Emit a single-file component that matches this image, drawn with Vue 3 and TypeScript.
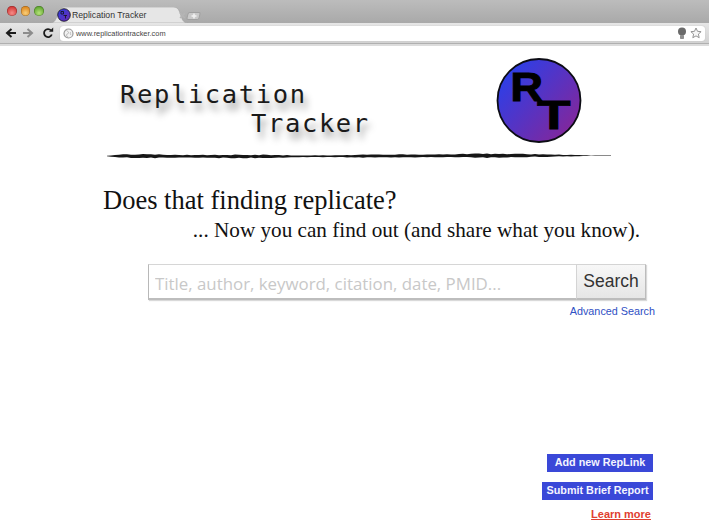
<script setup lang="ts">
const lights: string[] = ['red', 'amber', 'green']

// A dry-brush stroke: deterministic jitter along the top and bottom edges.
function jitter(i: number): number {
  const v = Math.sin(i * 12.9898) * 43758.5453
  return v - Math.floor(v)
}
function thickness(x: number): number {
  if (x < 10) return 0.3 + x * 0.09
  if (x > 480) return 0.2
  if (x > 430) return 1.4 - ((x - 430) / 50) * 1.1
  return 1.3 + 0.3 * Math.sin(x / 47) + 0.25 * Math.sin(x / 19)
}
const top: string[] = []
const bottom: string[] = []
for (let x = 0; x <= 504; x += 4) {
  const t = thickness(x)
  const mid = 3 + 0.4 * Math.sin(x / 90)
  top.push(`${x} ${(mid - t * (0.75 + jitter(x) * 0.5)).toFixed(2)}`)
  bottom.unshift(`${x} ${(mid + t * (0.75 + jitter(x + 7) * 0.5)).toFixed(2)}`)
}
const brushPath = `M${top.join(' L')} L${bottom.join(' L')} Z`
</script>

<template>
  <div class="window">
    <header class="chrome">
      <div class="tabstrip">
        <div class="lights">
          <span v-for="l in lights" :key="l" class="light" :class="l"></span>
        </div>
        <div class="tab">
          <svg class="tab-shape" width="138" height="16" viewBox="0 0 138 16">
            <path d="M0 16 C5 16 6 12 7.500 7.500 C9 3 10 0 15 0 H123 C128 0 129 3 130.500 7.500 C132 12 133 16 138 16 Z" fill="#e6e6e6" stroke="#a2a2a2" stroke-width="0.6" />
          </svg>
          <svg class="favicon" width="14" height="14" viewBox="0 0 14 14">
            <defs>
              <linearGradient id="fav" x1="0" y1="0" x2="1" y2="1">
                <stop offset="0" stop-color="#2f3fe0" />
                <stop offset="1" stop-color="#6a2ab0" />
              </linearGradient>
            </defs>
            <circle cx="7" cy="7" r="6.300" fill="url(#fav)" stroke="#111" stroke-width="0.8" />
            <path d="M4 3.500h2.500v2.500h-2.500zM6.500 7.500h3.500M8.500 7.500v3" fill="none" stroke="#111" stroke-width="0.8" />
          </svg>
          <span class="tab-title">Replication Tracker</span>
          <svg class="tab-close" width="7" height="7" viewBox="0 0 7 7">
            <path d="M1 1l5 5M6 1l-5 5" stroke="#b5b5b5" stroke-width="1.500" />
          </svg>
        </div>
        <div class="newtab">
          <svg width="6" height="6" viewBox="0 0 6 6"><path d="M3 0.500v5M0.500 3h5" stroke="#f2f2f2" stroke-width="1.500" /></svg>
        </div>
      </div>
      <div class="toolbar">
        <svg class="nav" width="12" height="12" viewBox="0 0 12 12">
          <path d="M11 6H3M6.500 2L2 6l4.500 4" fill="none" stroke="#1c1c1c" stroke-width="2" />
        </svg>
        <svg class="nav" width="12" height="12" viewBox="0 0 12 12">
          <path d="M1 6h8M5.500 2L10 6l-4.500 4" fill="none" stroke="#8c8c8c" stroke-width="2" />
        </svg>
        <svg class="nav reload" width="12" height="12" viewBox="0 0 12 12">
          <path d="M9.800 7.500A4 4 0 1 1 9 3.300" fill="none" stroke="#1c1c1c" stroke-width="1.800" />
          <path d="M7 4.800h4.200V0.600z" fill="#1c1c1c" />
        </svg>
        <div class="omnibox">
          <svg class="globe" width="11" height="11" viewBox="0 0 11 11">
            <circle cx="5.500" cy="5.500" r="4.500" fill="#f2f2f2" stroke="#9a9a9a" stroke-width="1.200" />
            <path d="M3.500 2.500c1 1 2.500 1 2 2.500s-2 .5-2 2 1.500 1.500 1.500 2M8 4c-1 .5-1 2 0 3" fill="none" stroke="#b0b0b0" stroke-width="0.800" />
          </svg>
          <span class="url">www.replicationtracker.com</span>
          <span class="omni-spacer"></span>
          <svg class="bulb" width="10" height="13" viewBox="0 0 10 13">
            <circle cx="5" cy="4.500" r="4" fill="#6a6a6a" />
            <rect x="3" y="8" width="4" height="4" rx="0.800" fill="#8f8f8f" />
          </svg>
          <svg class="star" width="12" height="12" viewBox="0 0 12 12">
            <path d="M6 1l1.500 3.300 3.600.4-2.700 2.400.8 3.600L6 8.900l-3.200 1.800.8-3.600L.9 4.700l3.600-.4z" fill="#f6f6f6" stroke="#8a8a8a" stroke-width="0.900" />
          </svg>
        </div>
      </div>
    </header>

    <main class="page">
      <section class="masthead">
        <div class="wordmark">
          <div class="word-one">Replication</div>
          <div class="word-two">Tracker</div>
        </div>
        <svg class="logo" width="86" height="87" viewBox="0 0 86 87">
          <defs>
            <linearGradient id="rt" x1="0.100" y1="0.150" x2="0.900" y2="0.850">
              <stop offset="0" stop-color="#2c3fe8" />
              <stop offset="1" stop-color="#82279c" />
            </linearGradient>
          </defs>
          <circle cx="43" cy="43.500" r="41.500" fill="url(#rt)" stroke="#0c0c14" stroke-width="1.800" />
          <text class="logo-letter" transform="translate(14.500 44) scale(1.020 0.92)" font-size="44" stroke="#000" stroke-width="1.200">R</text>
          <text class="logo-letter" transform="translate(41 71.500) scale(1.340 0.980)" font-size="41" stroke="#000" stroke-width="0.800">T</text>
        </svg>
      </section>

      <svg class="brush" width="504" height="6" viewBox="0 0 504 6">
        <path :d="brushPath" fill="#161616" />
      </svg>

      <h1 class="headline">Does that finding replicate?</h1>
      <p class="subline">... Now you can find out (and share what you know).</p>

      <form class="search" @submit.prevent>
        <input class="search-input" type="text" placeholder="Title, author, keyword, citation, date, PMID..." />
        <button class="search-btn" type="submit">Search</button>
      </form>
      <div class="advanced"><a href="#" @click.prevent>Advanced Search</a></div>

      <div class="actions">
        <a class="action add" href="#" @click.prevent>Add new RepLink</a>
        <a class="action submit" href="#" @click.prevent>Submit Brief Report</a>
        <a class="learn" href="#" @click.prevent>Learn more</a>
      </div>
    </main>
  </div>
</template>

<style>
html, body { margin: 0; background: #fff; overflow: hidden; }
</style>

<style scoped>
.window { width: 709px; height: 532px; overflow: hidden; display: flex; flex-direction: column; background: #fff; font-family: "Liberation Sans", Arial, sans-serif; }

.chrome { flex: none; height: 46px; display: flex; flex-direction: column; }
.tabstrip { height: 23px; display: flex; align-items: flex-end; background: linear-gradient(#bcbcbc, #a9a9a9); }
.lights { display: flex; gap: 4px; align-self: flex-start; padding: 6px 0 0 7px; width: 43px; box-sizing: border-box; flex: none; }
.light { width: 9.500px; height: 9.500px; border-radius: 50%; flex: none; box-shadow: inset 0 0 0 0.500px rgba(0,0,0,.35); }
.red { background: radial-gradient(circle at 50% 70%, #f58c88, #d43a38 70%); }
.amber { background: radial-gradient(circle at 50% 70%, #f8cf7a, #de8a22 70%); }
.green { background: radial-gradient(circle at 50% 70%, #b6e27a, #62a832 70%); }

.tab { position: relative; width: 138px; height: 16px; flex: none; margin-left: 7px; display: flex; align-items: center; padding-left: 7px; box-sizing: border-box; }
.tab-shape { position: absolute; left: 0; top: 0; }
.favicon, .tab-title, .tab-close { position: relative; }
.favicon { flex: none; }
.tab-title { font-size: 8.700px; color: #333; margin-left: 1px; white-space: nowrap; }
.tab-close { margin-left: 33px; flex: none; }
.newtab { width: 13px; height: 8px; margin: 0 0 3px -1px; background: #c9c9c9; border: 1px solid #a0a0a0; border-radius: 2px; transform: skewX(-14deg); display: flex; align-items: center; justify-content: center; box-sizing: border-box; flex: none; }
.newtab svg { transform: skewX(14deg); }

.toolbar { height: 20px; display: flex; align-items: center; padding: 0 4px 0 5px; gap: 5px; background: linear-gradient(#e6e6e6, #d2d2d2); border-bottom: 1px solid #b0b0b0; box-shadow: 0 2px 0 #dcdcdc; box-sizing: content-box; }
.nav { flex: none; }
.reload { margin-left: 3px; }
.omnibox { flex: 1; height: 15px; margin-left: 1px; background: #fff; border-radius: 3px; display: flex; align-items: center; padding: 0 3px 0 3px; box-shadow: 0 0 1px #aaa; }
.globe { flex: none; }
.url { font-size: 7.400px; color: #444; margin-left: 2px; white-space: nowrap; }
.omni-spacer { flex: 1; }
.bulb { flex: none; margin-right: 3px; }
.star { flex: none; }

.page { flex: 1; min-height: 0; display: flex; flex-direction: column; position: relative; }
.masthead { height: 98px; display: flex; align-items: flex-start; padding: 11px 0 0 120px; box-sizing: border-box; }
.wordmark { width: 376px; padding-top: 23px; font-family: "DejaVu Sans Mono", monospace; font-size: 25.500px; letter-spacing: 1.620px; color: #1a1a1a; text-shadow: 3px 7px 7px rgba(0,0,0,.42); line-height: 29px; flex: none; }
.word-two { margin-left: 131px; }
.logo { flex: none; margin-top: 0; }
.logo-letter { font-family: "Liberation Sans", Arial, sans-serif; font-weight: 700; fill: #000; }

.brush { display: block; margin: 9px 0 0 107px; flex: none; }

.headline { margin: 26px 0 0 103px; font-family: "Liberation Serif", "Times New Roman", serif; font-size: 26.500px; line-height: 31px; font-weight: 400; color: #111; }
.subline { margin: 2px 69px 0 0; text-align: right; font-family: "Liberation Serif", "Times New Roman", serif; font-size: 21.200px; line-height: 24px; color: #111; }

.search { display: flex; margin: 22px 0 0 148px; width: 498px; height: 36px; flex: none; box-shadow: 1px 1px 1px rgba(0,0,0,.15); }
.search-input { flex: 1; min-width: 0; height: 36px; box-sizing: border-box; padding: 3px 4px 0 6px; border: 1px solid #d6d6d6; border-left-color: #b8b8b8; border-bottom: 2px solid #bdbdbd; border-right: 0; background: #fff; font-family: "Open Sans", sans-serif; font-size: 16.850px; outline: none; }
.search-input::placeholder { color: #c8c8c8; opacity: 1; }
.search-btn { width: 70px; height: 36px; flex: none; padding: 0; border: 1px solid #d4d4d4; border-right-color: #bcbcbc; border-bottom: 2px solid #bcbcbc; background: linear-gradient(#f7f7f7, #e6e6e6); font-family: "Liberation Sans", Arial, sans-serif; font-size: 17.500px; color: #333; }

.advanced { margin: 5px 54px 0 0; text-align: right; font-size: 10.800px; line-height: 13px; }
.advanced a { color: #2f50c4; text-decoration: none; }

.actions { margin: 136px 56px 0 0; display: flex; flex-direction: column; align-items: flex-end; }
.action { display: block; box-sizing: border-box; height: 18px; line-height: 17px; background: #3a48d8; color: #f4f4ff; font-size: 10.800px; font-weight: 700; text-decoration: none; text-align: center; white-space: nowrap; }
.add { width: 106px; }
.submit { width: 111px; margin-top: 10px; }
.learn { margin: 7px 2px 0 0; font-size: 11px; font-weight: 700; line-height: 14px; color: #e04030; text-decoration: underline; }
</style>
